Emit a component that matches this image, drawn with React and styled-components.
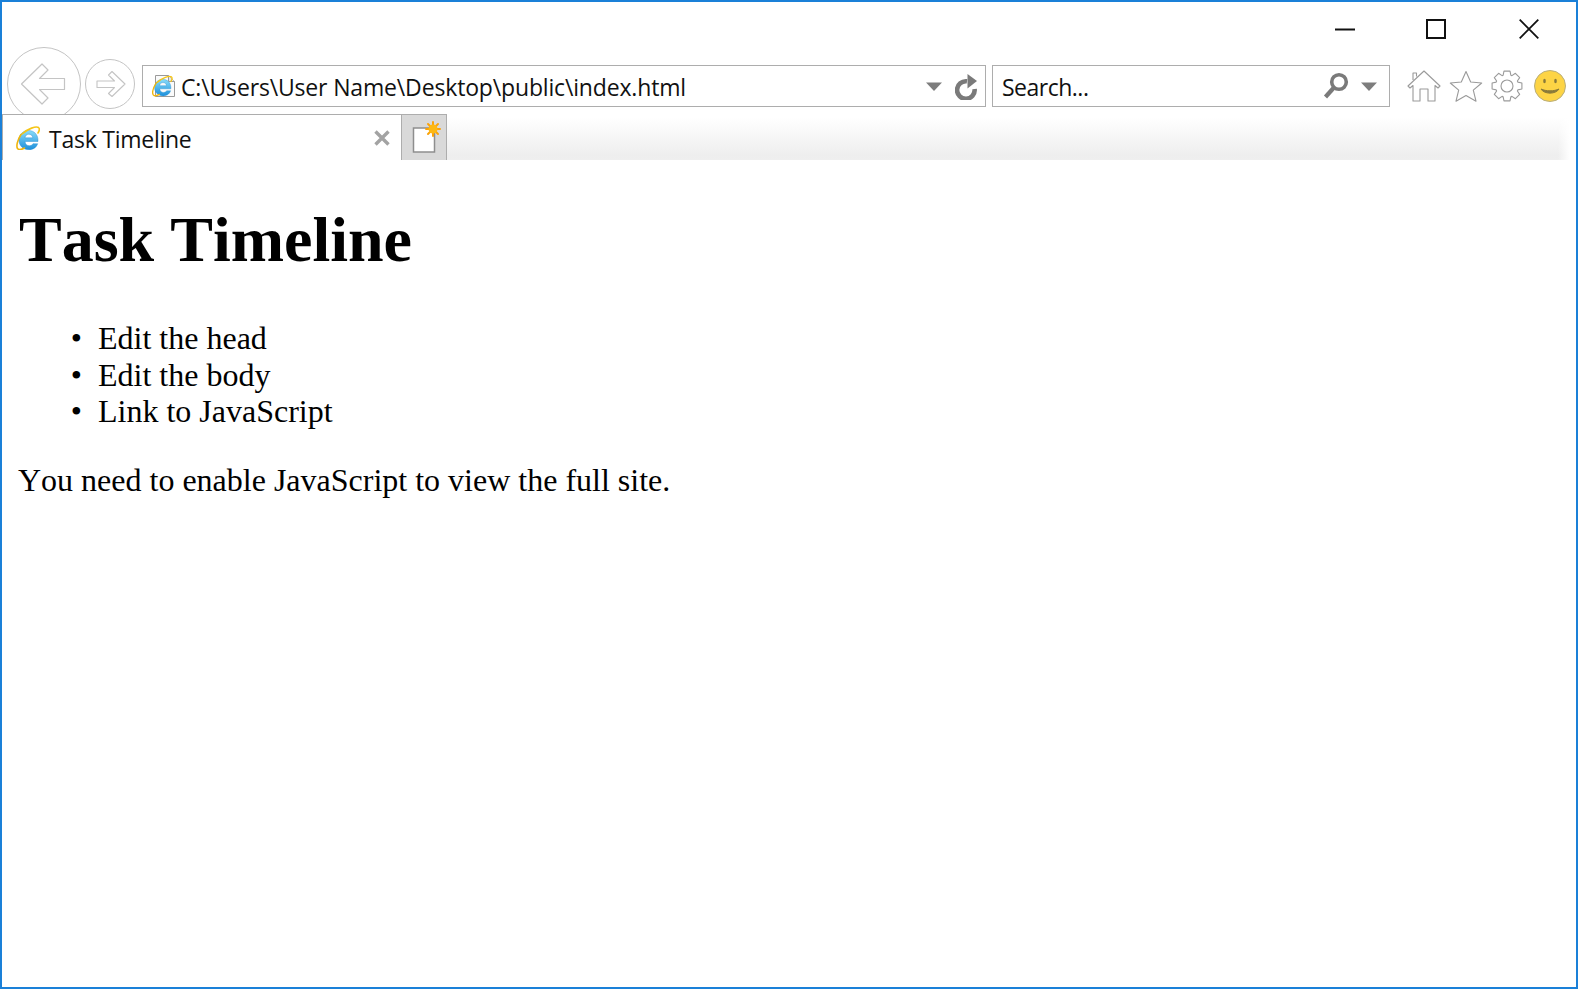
import React from "react";
import styled, { createGlobalStyle } from "styled-components";

const Global = createGlobalStyle`
  html, body { margin: 0; padding: 0; background: #fff; }
  #root { height: 989px; }
`;

const Win = styled.div`
  box-sizing: border-box;
  width: 1578px;
  height: 989px;
  border: 2px solid #1a80d8;
  background: #fff;
  overflow: hidden;
  display: flex;
  flex-direction: column;
`;

const TitleBar = styled.div`
  height: 45px;
  display: flex;
  justify-content: flex-end;
  align-items: flex-start;
  padding-right: 37px;
  flex: none;
`;

const WinBtn = styled.svg`
  width: 20px;
  height: 20px;
  margin-top: 17px;
  margin-left: ${(p) => p.$ml}px;
  display: block;
  fill: none;
  stroke: #111;
`;

const NavRow = styled.div`
  height: 67px;
  flex: none;
  display: flex;
  align-items: flex-start;
`;

const BackBtn = styled.svg`
  width: 74px;
  height: 74px;
  margin-left: 5px;
  flex: none;
  display: block;
`;

const ForwardBtn = styled.svg`
  width: 50px;
  height: 50px;
  margin: 12px 0 0 4px;
  flex: none;
  display: block;
`;

const Field = styled.div`
  box-sizing: border-box;
  height: 42px;
  margin-top: 18px;
  border: 1px solid #adadad;
  background: #fff;
  display: flex;
  align-items: center;
  flex: none;
  width: ${(p) => p.$w}px;
  margin-left: ${(p) => p.$ml}px;
  font-family: "Open Sans", "Noto Sans", sans-serif;
  font-size: 23px;
  color: #111;
`;

const FieldText = styled.span`
  flex: 1;
  white-space: nowrap;
  padding-top: 2px;
  letter-spacing: ${(p) => p.$ls};
  margin-left: ${(p) => p.$ml}px;
`;

const PageGlyph = styled.svg`
  width: 24px;
  height: 24px;
  margin-left: 9px;
  display: block;
  flex: none;
`;

const CaretGlyph = styled.svg`
  width: 16px;
  height: 9px;
  margin-right: ${(p) => p.$mr}px;
  display: block;
  flex: none;
`;

const ReloadGlyph = styled.svg`
  width: 23px;
  height: 27px;
  margin-right: 7px;
  display: block;
  flex: none;
`;

const SearchGlyph = styled.svg`
  width: 26px;
  height: 28px;
  margin-right: 12px;
  display: block;
  flex: none;
`;

const Icons = styled.div`
  display: flex;
  margin: 23px 0 0 17px;
  gap: 8px;
  align-items: center;
`;

const IconSvg = styled.svg`
  width: ${(p) => p.$w}px;
  height: 32px;
  margin-left: ${(p) => p.$ml || 0}px;
  display: block;
  flex: none;
`;

const TabRow = styled.div`
  height: 46px;
  flex: none;
  display: flex;
  position: relative;
  background: linear-gradient(to bottom, #fff 0%, #fff 8%, #eeeeee 90%, #efefef 100%);
`;

const Tab = styled.div`
  box-sizing: border-box;
  width: 399px;
  background: #fff;
  border-top: 1px solid #adadad;
  border-left: 1px solid #adadad;
  display: flex;
  align-items: center;
  padding: 0 11px 0 13px;
  font-family: "Open Sans", "Noto Sans", sans-serif;
  font-size: 23px;
  letter-spacing: -0.25px;
  color: #111;
`;

const TabLogo = styled.svg`
  width: 24px;
  height: 24px;
  display: block;
  flex: none;
`;

const TabTitle = styled.span`
  flex: 1;
  margin-left: 9px;
  padding-top: 2px;
  white-space: nowrap;
`;

const TabClose = styled.svg`
  width: 16px;
  height: 16px;
  display: block;
  flex: none;
`;

const NewTab = styled.div`
  box-sizing: border-box;
  width: 46px;
  background: #d9d9d9;
  border: 1px solid #adadad;
  border-bottom: 0;
  display: flex;
  align-items: center;
  justify-content: center;
`;

const NewTabGlyph = styled.svg`
  width: 32px;
  height: 32px;
  display: block;
  overflow: visible;
`;

const RightFade = styled.div`
  position: absolute;
  right: 0;
  top: 0;
  bottom: 0;
  width: 18px;
  background: linear-gradient(to right, rgba(255, 255, 255, 0), #fff 67%);
`;

const Page = styled.main`
  flex: 1;
  padding: 0 16px;
  font-family: "Liberation Serif", "Times New Roman", serif;
  font-size: 32px;
  font-kerning: none;
  color: #000;
`;

const Heading = styled.h1`
  font-size: 64px;
  margin: 43px 0 43px 1px;
  font-weight: bold;
  line-height: 74px;
`;

const List = styled.ul`
  margin: 32px 0;
  padding-left: 80px;
  list-style-type: "•\\00a0\\00a0";
`;

const Item = styled.li`
  line-height: 36.6px;
`;

const Notice = styled.p`
  margin: 32px 0;
  line-height: 36.6px;
`;

const E_PATH =
  "M12.500 4.500C18 4.500 22 8.500 22 14.300v1.200H9c.3 2.800 2 4.200 4.300 4.200 1.700 0 3-.7 3.700-2h4.700c-1.200 3.700-4.300 6-8.500 6C7 23.700 3 19.800 3 14 3 8.500 7 4.500 12.500 4.500zM16.800 11.800c-.3-2.300-1.900-3.600-4-3.600-2.200 0-3.500 1.500-3.800 3.600z";

const IeMark = ({ id }) => (
  <>
    <defs>
      <linearGradient id={id} x1="0" y1="0" x2="0" y2="1">
        <stop offset="0" stopColor="#8adcf8" />
        <stop offset="1" stopColor="#1c90dc" />
      </linearGradient>
    </defs>
    <path d={E_PATH} fillRule="evenodd" fill={`url(#${id})`} stroke="#1a86cf" strokeWidth=".4" />
    <path d="M6 8C12 2.500 20 0 22.500 1.500c1.200 1 1 3-.5 5.500" fill="none" stroke="#f5c518" strokeWidth="1.600" strokeLinecap="round" />
    <path d="M5 8.500C1.500 14 0 20 1.500 22.500c1.200 1.500 4 1.200 7-.5" fill="none" stroke="#f0b50c" strokeWidth="1.600" strokeLinecap="round" />
  </>
);

const Caret = ({ mr }) => (
  <CaretGlyph $mr={mr} viewBox="0 0 16 9">
    <path d="M0 .5h16L8 9z" fill="#7d7d7d" />
  </CaretGlyph>
);

const gearPath = (() => {
  const cx = 16, cy = 16, teeth = 8;
  let d = "";
  for (let i = 0; i < teeth; i++) {
    const a = (i / teeth) * Math.PI * 2;
    const pts = [
      [11.5, a - 0.34], [15.2, a - 0.2], [15.2, a + 0.2], [11.5, a + 0.34],
    ];
    pts.forEach(([r, t], j) => {
      const x = (cx + r * Math.cos(t)).toFixed(2);
      const y = (cy + r * Math.sin(t)).toFixed(2);
      d += `${i === 0 && j === 0 ? "M" : "L"}${x} ${y} `;
    });
  }
  return d + "Z";
})();

export default function App() {
  return (
    <>
      <Global />
      <Win>
        <TitleBar>
          <WinBtn $ml={0} viewBox="0 0 20 20"><path d="M0 10.500h20" strokeWidth="2" /></WinBtn>
          <WinBtn $ml={71} viewBox="0 0 20 20"><rect x="1" y="1" width="18" height="18" strokeWidth="2" /></WinBtn>
          <WinBtn $ml={73} viewBox="0 0 20 20"><path d="M.7.700l18.600 18.600M19.300.700.700 19.300" strokeWidth="1.800" /></WinBtn>
        </TitleBar>
        <NavRow>
          <BackBtn viewBox="0 0 74 74">
            <circle cx="37" cy="37" r="36.500" fill="#fff" stroke="#c4c4c4" />
            <path d="M14.500 37 35 17l6 6-8.500 8.500H57.500v11H32.500L41 51l-6 6z" fill="#fff" stroke="#c4c4c4" strokeWidth="1.200" strokeLinejoin="round" />
          </BackBtn>
          <ForwardBtn viewBox="0 0 50 50">
            <circle cx="25" cy="25" r="24.500" fill="#fff" stroke="#c4c4c4" />
            <path d="M40 25 27 12.500l-3.500 3.500 6 6H12v6.500h17.500l-6 6L27 37.500z" fill="#fff" stroke="#c4c4c4" strokeWidth="1.100" strokeLinejoin="round" />
          </ForwardBtn>
          <Field $w={844} $ml={7}>
            <PageGlyph viewBox="0 0 24 24">
              <path d="M3.500 1.500h13l6 6v15h-19z" fill="#fbfbfb" stroke="#9a9a9a" />
              <path d="M16.500 1.500v6h6" fill="#e8e8e8" stroke="#9a9a9a" />
              <g transform="translate(0 1.500) scale(.86)">
                <IeMark id="iePage" />
              </g>
            </PageGlyph>
            <FieldText $ml={5} $ls="-0.16px">C:\Users\User Name\Desktop\public\index.html</FieldText>
            <Caret mr={13} />
            <ReloadGlyph viewBox="0 0 23 27">
              <path d="M12 8.300A8.800 8.800 0 1 0 19.600 16" fill="none" stroke="#7a7a7a" strokeWidth="4.600" />
              <path d="M12.500 1l9.500 7-9.500 7.500z" fill="#7a7a7a" />
            </ReloadGlyph>
          </Field>
          <Field $w={398} $ml={6}>
            <FieldText $ml={9} $ls="-0.5px">Search...</FieldText>
            <SearchGlyph viewBox="0 0 26 28">
              <circle cx="16" cy="10" r="7.300" fill="none" stroke="#7a7a7a" strokeWidth="3.600" />
              <path d="M10.500 16 2.500 25" stroke="#7a7a7a" strokeWidth="4.200" fill="none" />
            </SearchGlyph>
            <Caret mr={12} />
          </Field>
          <Icons>
            <IconSvg $w={34} viewBox="0 0 34 32">
              <path d="M1 16 17 1l16 15-2 2-3-2.500V31h-7V19h-8v12H6V15.500L3 18zM6 10V3h3.500v3.500" fill="#fff" stroke="#9a9a9a" strokeWidth="1.100" strokeLinejoin="round" />
            </IconSvg>
            <IconSvg $w={34} viewBox="0 0 34 32">
              <path d="M17 1.500l4.700 10.500 11 1-8.400 7.200 2.700 11L17 25.500 7 31.200l2.700-11L1.300 13l11-1z" fill="#fff" stroke="#9a9a9a" strokeWidth="1.100" strokeLinejoin="round" />
            </IconSvg>
            <IconSvg $w={32} viewBox="0 0 32 32">
              <path d={gearPath} fill="#fff" stroke="#9a9a9a" strokeWidth="1.100" strokeLinejoin="round" />
              <circle cx="16" cy="16" r="6" fill="#fff" stroke="#9a9a9a" strokeWidth="1.100" />
            </IconSvg>
            <IconSvg $w={32} $ml={3} viewBox="0 0 32 32">
              <circle cx="16" cy="16" r="15.500" fill="#fdd445" stroke="#b9ae7c" />
              <ellipse cx="10.500" cy="11" rx="1.300" ry="2.200" fill="#8a7a3a" />
              <ellipse cx="21.500" cy="11" rx="1.300" ry="2.200" fill="#8a7a3a" />
              <path d="M7 19c3 5.500 15 5.500 18 0-5 2.400-13 2.400-18 0z" fill="#8a7a3a" stroke="#8a7a3a" />
            </IconSvg>
          </Icons>
        </NavRow>
        <TabRow>
          <Tab>
            <TabLogo viewBox="0 0 24 24">
              <IeMark id="ieTab" />
            </TabLogo>
            <TabTitle>Task Timeline</TabTitle>
            <TabClose viewBox="0 0 16 16">
              <path d="M1.500 1.500l13 13M14.500 1.500l-13 13" stroke="#a3a3a3" strokeWidth="3.400" />
            </TabClose>
          </Tab>
          <NewTab>
            <NewTabGlyph viewBox="0 0 32 32">
              <rect x="5.500" y="6" width="21" height="24" fill="#fff" stroke="#8e8e8e" strokeWidth="1.500" />
              <g stroke="#fba30a" strokeWidth="2" strokeLinecap="round">
                <path d="M25 0v14M18 7h14M20 2l10 10M30 2 20 12" />
              </g>
              <circle cx="25" cy="7" r="4.500" fill="#fdb813" />
            </NewTabGlyph>
          </NewTab>
          <RightFade />
        </TabRow>
        <Page>
          <Heading>Task Timeline</Heading>
          <List>
            <Item>Edit the head</Item>
            <Item>Edit the body</Item>
            <Item>Link to JavaScript</Item>
          </List>
          <Notice>You need to enable JavaScript to view the full site.</Notice>
        </Page>
      </Win>
    </>
  );
}
